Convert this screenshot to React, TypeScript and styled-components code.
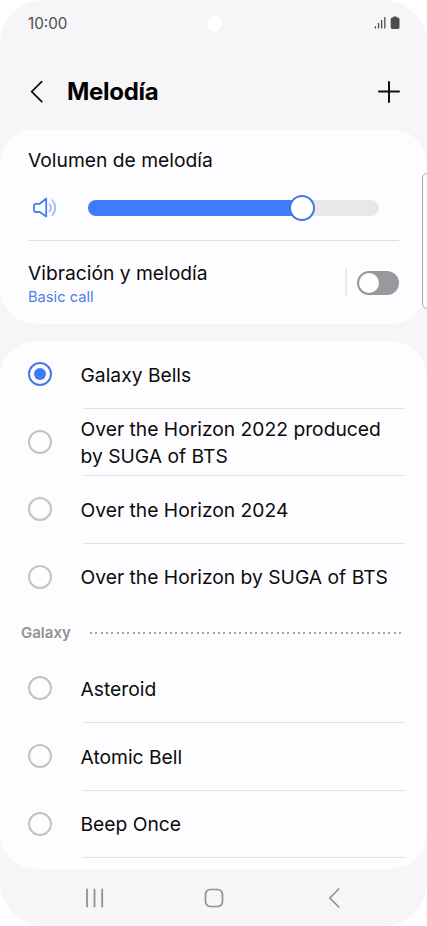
import React from "react";
import styled, { createGlobalStyle } from "styled-components";

const GlobalStyle = createGlobalStyle`
  body { margin: 0; background: #fff; }
  *, *::before, *::after { box-sizing: border-box; }
`;

const Phone = styled.div`
  position: relative;
  width: 427px;
  height: 926px;
  display: flex;
  flex-direction: column;
  overflow: hidden;
  border-radius: 44px;
  background: #f6f6f8;
  color: #0b0b0c;
  font-family: Inter, Roboto, sans-serif;
`;

const StatusBar = styled.div`
  height: 46px;
  display: grid;
  grid-template-columns: 1fr 16px 1fr;
  align-items: center;
  padding: 0 26px 0 28px;
`;

const Clock = styled.span`
  padding-top: 1px;
  font-size: 15.2px;
  line-height: 20px;
  color: #4c4c4e;
`;

const Camera = styled.span`
  width: 15px;
  height: 15px;
  border-radius: 50%;
  background: #fff;
`;

const StatusIcons = styled.svg`
  justify-self: end;
  display: block;
`;

const Header = styled.header`
  height: 83px;
  display: flex;
  align-items: center;
  padding: 8px 27px 0 29px;

  svg { display: block; }
`;

const Title = styled.h1`
  flex: 1;
  margin: 0 0 0 22px;
  padding-top: 1px;
  font-size: 24px;
  line-height: 32px;
  font-weight: 650;
  letter-spacing: -0.3px;
  color: #000;
`;

const Card = styled.section<{ $height: number }>`
  height: ${(p) => p.$height}px;
  flex: none;
  border-radius: 36px;
  background: #fdfdff;
  overflow: hidden;
`;

const VolumeBlock = styled.div`
  height: 112px;
  margin: 0 28px;
  padding-top: 18px;
  border-bottom: 1px solid #e0e0e2;
`;

const Label = styled.div`
  font-size: 19.25px;
  line-height: 26px;
  white-space: pre-line;
`;

const VolumeRow = styled.div`
  height: 28px;
  display: flex;
  align-items: center;
  margin-top: 21px;
  padding: 0 20px 0 4px;
`;

const Track = styled.div`
  flex: 1;
  height: 16px;
  display: flex;
  align-items: center;
  margin-left: 30px;
  border-radius: 8px;
  background: #e8e8ea;
`;

const Fill = styled.div`
  width: 208px;
  height: 16px;
  border-radius: 8px 0 0 8px;
  background: #3d7cfd;
`;

const Thumb = styled.div`
  width: 26px;
  height: 26px;
  margin-left: -7px;
  border: 2px solid #4078e4;
  border-radius: 50%;
  background: #fff;
`;

const VibrationRow = styled.div`
  display: flex;
  align-items: center;
  height: 83px;
  margin: 0 28px;
`;

const VibrationText = styled.div`
  flex: 1;
  padding-top: 1px;
`;

const Sub = styled.div`
  margin-top: 2px;
  font-size: 14.7px;
  line-height: 19px;
  color: #4a80e8;
`;

const Separator = styled.span`
  width: 2px;
  height: 27px;
  background: #e8e8ea;
`;

const Switch = styled.span`
  width: 42px;
  height: 24px;
  margin-left: 10px;
  padding: 2px;
  border-radius: 12px;
  background: #99989d;

  &::before {
    content: "";
    display: block;
    width: 20px;
    height: 20px;
    border-radius: 50%;
    background: #fff;
  }
`;

const Gap = styled.div`
  height: 17px;
  flex: none;
`;

const Row = styled.div`
  height: 67.6px;
  display: flex;
  align-items: stretch;
  padding: 0 22px 0 28px;
`;

const Radio = styled.span<{ $on?: boolean }>`
  align-self: center;
  flex: none;
  width: 24px;
  height: 24px;
  margin-bottom: 1.4px;
  display: grid;
  place-items: center;
  border: 2px solid ${(p) => (p.$on ? "#4279e6" : "#c3c3c6")};
  border-radius: 50%;

  &::before {
    content: "";
    width: 12px;
    height: 12px;
    border-radius: 50%;
    background: ${(p) => (p.$on ? "#3d7cfd" : "transparent")};
  }
`;

const RowText = styled.div<{ $line: boolean }>`
  flex: 1;
  display: flex;
  align-items: center;
  margin-left: 31px;
  border-bottom: 1px solid ${(p) => (p.$line ? "#e0e0e2" : "transparent")};

  ${Label} {
    margin-left: -2.5px;
    margin-right: -10px;
    padding-top: 1.5px;
    line-height: 27px;
  }
`;

const GroupHeader = styled.div`
  height: 44px;
  display: flex;
  align-items: center;
  padding: 0 24px 1px 21px;
`;

const GroupName = styled.span`
  width: 68.5px;
  font-size: 15px;
  line-height: 20px;
  font-weight: 600;
  color: #929295;
`;

const Dots = styled.span`
  flex: 1;
  height: 2px;
  background: repeating-linear-gradient(90deg, #a2a2a5 0 2px, transparent 2px 5.33px);
`;

const NavBar = styled.nav`
  flex: 1;
  display: flex;
  align-items: center;
  padding: 1px 84px 0 84px;
  justify-content: space-between;
`;

const EdgePanel = styled.span`
  position: absolute;
  top: 173px;
  right: -8px;
  width: 13px;
  height: 136px;
  border: 1px solid #a9a9ac;
  border-radius: 5px;
  background: #fdfdff;
`;

type Tone = { name: string; on?: boolean; line?: boolean };

const mainTones: Tone[] = [
  { name: "Galaxy Bells", on: true, line: true },
  { name: "Over the Horizon 2022 produced\nby SUGA of BTS", line: true },
  { name: "Over the Horizon 2024", line: true },
  { name: "Over the Horizon by SUGA of BTS" },
];

const galaxyTones: Tone[] = [
  { name: "Asteroid", line: true },
  { name: "Atomic Bell", line: true },
  { name: "Beep Once", line: true },
];

const ToneRow = ({ tone }: { tone: Tone }) => (
  <Row>
    <Radio $on={tone.on} />
    <RowText $line={!!tone.line}>
      <Label>{tone.name}</Label>
    </RowText>
  </Row>
);

export default function App() {
  return (
    <>
      <GlobalStyle />
      <Phone>
        <StatusBar>
          <Clock>10:00</Clock>
          <Camera />
          <StatusIcons width="27" height="14" viewBox="0 0 27 14" fill="#4c4c4e">
            <rect x="0.8" y="10.2" width="1.3" height="2.3" />
            <rect x="3.9" y="7" width="1.3" height="5.5" />
            <rect x="7" y="4" width="1.3" height="8.5" />
            <rect x="10.2" y="1" width="1.3" height="11.5" />
            <path d="M19 1.6q0-1 1-1h2q1 0 1 1h.8q1.7 0 1.7 1.7v8q0 1.7-1.7 1.7h-5.4q-1.7 0-1.7-1.7v-8q0-1.7 1.7-1.7z" />
          </StatusIcons>
        </StatusBar>
        <Header>
          <svg width="16" height="24" viewBox="0 0 16 24" fill="none" stroke="#111" strokeWidth="1.8" strokeLinecap="round" strokeLinejoin="round">
            <path d="M12.7 1.7 2.7 11.7l10 10" />
          </svg>
          <Title>Melodía</Title>
          <svg width="22" height="22" viewBox="0 0 22 22" fill="none" stroke="#111" strokeWidth="2" strokeLinecap="round">
            <path d="M11 1v20M1 10.5h20" />
          </svg>
        </Header>
        <Card $height={195}>
          <VolumeBlock>
            <Label>Volumen de melodía</Label>
            <VolumeRow>
              <svg width="26" height="22" viewBox="0 0 26 22" fill="none" strokeLinecap="round" strokeLinejoin="round">
                <path d="M4 6.8h3.7L14.2 1.5v18L7.7 15H4q-2 0-2-2V8.8q0-2 2-2z" stroke="#4a80e8" strokeWidth="1.8" />
                <path d="M17.5 7.3q3 3.5 0 7M20.3 3.2q6 7.3 0 15.2" stroke="#a5bdf2" strokeWidth="1.8" />
              </svg>
              <Track>
                <Fill />
                <Thumb />
              </Track>
            </VolumeRow>
          </VolumeBlock>
          <VibrationRow>
            <VibrationText>
              <Label>Vibración y melodía</Label>
              <Sub>Basic call</Sub>
            </VibrationText>
            <Separator />
            <Switch />
          </VibrationRow>
        </Card>
        <Gap />
        <Card $height={528}>
          {mainTones.map((t) => (
            <ToneRow key={t.name} tone={t} />
          ))}
          <GroupHeader>
            <GroupName>Galaxy</GroupName>
            <Dots />
          </GroupHeader>
          {galaxyTones.map((t) => (
            <ToneRow key={t.name} tone={t} />
          ))}
        </Card>
        <NavBar>
          <svg width="20" height="20" viewBox="0 0 20 20" stroke="#919194" strokeWidth="1.8" strokeLinecap="round">
            <path d="M3 1.5v17M10.5 1.5v17M18.2 1.5v17" />
          </svg>
          <svg width="20" height="20" viewBox="0 0 20 20" fill="none" stroke="#919194" strokeWidth="1.7">
            <rect x="1.5" y="1.5" width="17" height="17" rx="5" />
          </svg>
          <svg width="20" height="20" viewBox="0 0 20 20" fill="none" stroke="#919194" strokeWidth="1.7" strokeLinecap="round" strokeLinejoin="round">
            <path d="M15.8 1 6.8 10l9 9" />
          </svg>
        </NavBar>
        <EdgePanel />
      </Phone>
    </>
  );
}
